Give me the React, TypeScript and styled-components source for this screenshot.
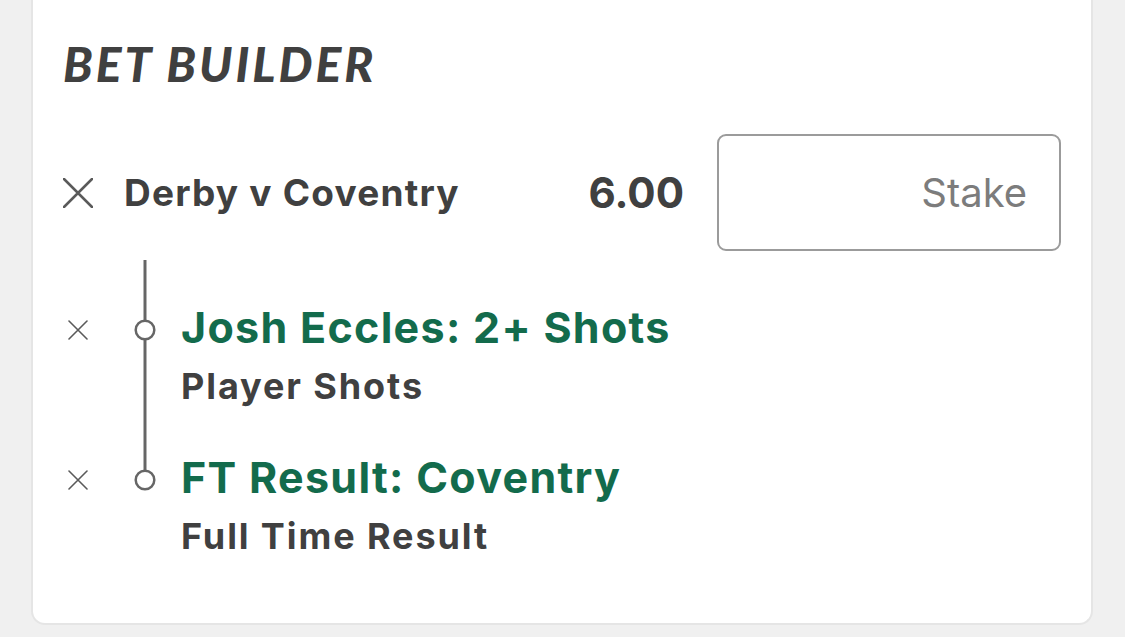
import React from 'react'
import styled, { createGlobalStyle } from 'styled-components'

const GlobalStyle = createGlobalStyle`
  html, body {
    margin: 0;
    padding: 0;
    background: #f0f0f0;
  }
  body {
    font-family: Inter, "Noto Sans", sans-serif;
    color: #404040;
  }
`

const Page = styled.div`
  height: 637px;
  padding: 0 32px 0 31px;
  box-sizing: border-box;
`

const Card = styled.div`
  height: 625px;
  box-sizing: border-box;
  background: #fff;
  border: 2px solid #e5e5e5;
  border-top: none;
  border-radius: 0 0 14px 14px;
  padding: 40px 30px 0 30px;
`

const Title = styled.h1`
  margin: 0;
  font-family: Lato, "Open Sans", sans-serif;
  font-weight: 900;
  font-style: italic;
  font-size: 48px;
  line-height: 48px;
  letter-spacing: 3px;
  color: #404040;
`

const LegHeader = styled.div`
  display: flex;
  align-items: center;
  margin-top: 46px;
`

const RemoveButton = styled.button<{ $size: number }>`
  display: flex;
  align-items: center;
  justify-content: center;
  width: ${(p) => p.$size}px;
  height: ${(p) => p.$size}px;
  padding: 0;
  border: none;
  background: none;
  color: #5a5a5a;
  cursor: pointer;
`

const EventName = styled.div`
  flex: 1;
  margin-left: 31px;
  font-size: 37px;
  font-weight: 700;
  line-height: 44px;
  letter-spacing: 1.2px;
`

const Odds = styled.div`
  font-size: 42px;
  font-weight: 700;
  line-height: 50px;
  margin-right: 33px;
`

const StakeBox = styled.div`
  width: 344px;
  height: 117px;
  box-sizing: border-box;
  border: 2.5px solid #9b9b9b;
  border-radius: 9px;
  display: flex;
  align-items: center;
  justify-content: flex-end;
  padding-right: 32px;
  font-size: 40px;
  font-weight: 400;
  color: #7c7c7c;
`

const Selections = styled.div`
  margin-top: 9px;
`

const SelectionRow = styled.div`
  display: grid;
  grid-template-columns: 64px 36px 1fr;
  height: 150px;
`

const SmallRemove = styled(RemoveButton)`
  margin-top: 55px;
`

const SelectionText = styled.div`
  padding: 43px 0 0 18px;
`

const SelectionName = styled.div`
  font-size: 43px;
  font-weight: 700;
  line-height: 48px;
  letter-spacing: 1.3px;
  color: #136b4c;
`

const MarketName = styled.div`
  margin-top: 15px;
  font-size: 36px;
  font-weight: 700;
  line-height: 40px;
  letter-spacing: 1.9px;
  color: #404040;
`

const CloseIcon = ({ size, stroke }: { size: number; stroke: number }) => (
  <svg width={size} height={size} viewBox={`0 0 ${size} ${size}`}>
    <path
      d={`M1 1 L${size - 1} ${size - 1} M${size - 1} 1 L1 ${size - 1}`}
      stroke="currentColor"
      strokeWidth={stroke}
      strokeLinecap="round"
    />
  </svg>
)

const Connector = ({ last }: { last: boolean }) => (
  <svg width="36" height="150" viewBox="0 0 36 150">
    <line x1="18" y1="0" x2="18" y2="60" stroke="#666" strokeWidth="3" />
    {!last && <line x1="18" y1="80" x2="18" y2="150" stroke="#666" strokeWidth="3" />}
    <circle cx="18" cy="70" r="9.3" fill="#fff" stroke="#666" strokeWidth="2.5" />
  </svg>
)

const selections = [
  { name: 'Josh Eccles: 2+ Shots', market: 'Player Shots' },
  { name: 'FT Result: Coventry', market: 'Full Time Result' },
]

const App: React.FC = () => {
  return (
    <Page>
      <GlobalStyle />
      <Card>
        <Title>BET BUILDER</Title>
        <LegHeader>
          <RemoveButton $size={30}>
            <CloseIcon size={30} stroke={2.5} />
          </RemoveButton>
          <EventName>Derby v Coventry</EventName>
          <Odds>6.00</Odds>
          <StakeBox>Stake</StakeBox>
        </LegHeader>
        <Selections>
          {selections.map((s, i) => (
            <SelectionRow key={s.name}>
              <SmallRemove $size={30}>
                <CloseIcon size={20} stroke={1.6} />
              </SmallRemove>
              <Connector last={i === selections.length - 1} />
              <SelectionText>
                <SelectionName>{s.name}</SelectionName>
                <MarketName>{s.market}</MarketName>
              </SelectionText>
            </SelectionRow>
          ))}
        </Selections>
      </Card>
    </Page>
  )
}

export default App
